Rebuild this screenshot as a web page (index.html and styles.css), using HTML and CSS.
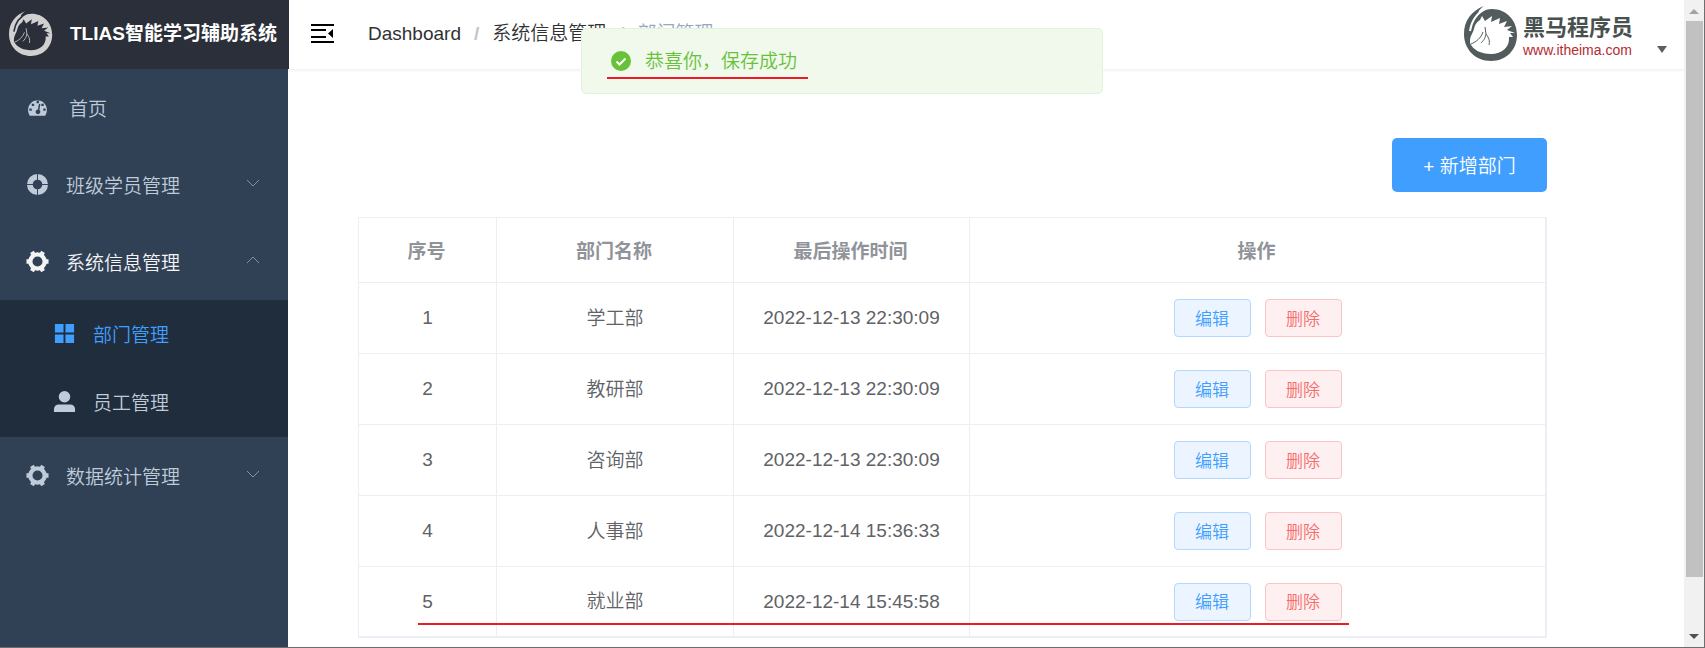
FILE: index.html
```html
<!DOCTYPE html>
<html lang="zh-CN">
<head>
    <meta charset="UTF-8">
    <meta name="viewport" content="width=device-width, initial-scale=1.0">
    <title>TLIAS智能学习辅助系统</title>
    <link rel="stylesheet" href="styles.css">
</head>
<body>
    <!-- shared icons -->
    <svg class="sprite" aria-hidden="true">
        <symbol id="horse" viewBox="0 0 54 56">
            <path d="M20 0C7 5 0 15 0 28C0 44 12 55 27 55C42 55 53 44 53 29C53 14 42 3 28 3C24 3 20 4 17 6C13 8 14 4 20 0Z"/>
            <path class="hole-line" d="M23 2C14 6 8 13 6 25"/>
            <path class="hole" d="M6 35C6 30 9 27 10 23C11 18 13 16 16 14L18 10L21 15L28 10L27 16L36 12L35 18L43 15L40 21L48 20L43 24L51 27L46 27L49 31L45 31C46 41 38 48 27 48C17 48 9 44 6 37Z"/>
            <path class="face" d="M7 38C12 36 17 32 19 26M21 21L22 28C21 33 19 35 17 37M22 28C25 32 26 35 25 39"/>
        </symbol>
        <symbol id="gear" viewBox="0 0 24 24">
            <circle cx="12" cy="12" r="7.500" fill="none" stroke="currentColor" stroke-width="4.500"/>
            <path d="M.5 12H4M20 12h3.500M6.200 2 8 5M16 19l1.800 3M17.800 2 16 5M8 19l-1.800 3" stroke="currentColor" stroke-width="4.500"/>
        </symbol>
        <symbol id="arrow" viewBox="0 0 14 8">
            <path d="M1 1l6 6 6-6" fill="none" stroke="currentColor"/>
        </symbol>
    </svg>

    <div class="app">
        <aside class="sidebar">
            <div class="brand">
                <svg class="brand-logo"><use href="#horse"/></svg>
                <h1>TLIAS智能学习辅助系统</h1>
            </div>
            <nav class="menu">
                <a href="#" class="item home">
                    <svg class="icon" viewBox="0 0 24 24"><path fill-rule="evenodd" d="M4 20.500C1 16 2 10.500 5 7.500c4-4 10-4 14 0 3 3 4 8.500 1 13ZM11 5h2.500v2.500H11ZM6 8h2.500v2.500H6ZM16 8h2.500v2.500H16ZM3.500 13H6v2.500H3.500ZM18 13h2.500v2.500H18ZM13.500 8l-1 6a2.500 2.500 0 1 0 1.500.5L15 8.500Z"/></svg>
                    <span>首页</span>
                </a>
                <a href="#" class="item">
                    <svg class="icon" viewBox="0 0 24 24"><circle cx="12" cy="12" r="8" fill="none" stroke="currentColor" stroke-width="6"/><path class="gap" d="M12 0v8M12 16v8M0 12h8M16 12h8"/></svg>
                    <span>班级学员管理</span>
                    <svg class="arrow"><use href="#arrow"/></svg>
                </a>
                <a href="#" class="item open">
                    <svg class="icon"><use href="#gear"/></svg>
                    <span>系统信息管理</span>
                    <svg class="arrow up"><use href="#arrow"/></svg>
                </a>
                <div class="submenu">
                    <a href="#" class="subitem active">
                        <svg class="icon" viewBox="0 0 24 24"><path d="M2 2h9v9H2ZM13 2h9v9H13ZM2 13h9v9H2ZM13 13h9v9H13Z"/></svg>
                        <span>部门管理</span>
                    </a>
                    <a href="#" class="subitem">
                        <svg class="icon" viewBox="0 0 24 24"><circle cx="12" cy="7" r="6"/><path d="M1 23v-3a5 5 0 0 1 5-5h12a5 5 0 0 1 5 5v3Z"/></svg>
                        <span>员工管理</span>
                    </a>
                </div>
                <a href="#" class="item">
                    <svg class="icon"><use href="#gear"/></svg>
                    <span>数据统计管理</span>
                    <svg class="arrow"><use href="#arrow"/></svg>
                </a>
            </nav>
        </aside>

        <div class="page">
            <header class="navbar">
                <button type="button" class="fold" aria-label="收起菜单">
                    <svg viewBox="0 0 23 20"><path d="M0 0h23v2H0ZM0 5h15v2H0ZM0 12h15v2H0ZM0 17h23v2H0ZM22 5v9l-5-4.500Z"/></svg>
                </button>
                <nav class="breadcrumb">
                    <a href="#">Dashboard</a><i>/</i><a href="#">系统信息管理</a><i>/</i><span>部门管理</span>
                </nav>
                <div class="account">
                    <svg class="heima-logo"><use href="#horse"/></svg>
                    <div class="heima">
                        <strong>黑马程序员</strong>
                        <span>www.itheima.com</span>
                    </div>
                    <button type="button" class="caret" aria-label="账号"></button>
                </div>
            </header>

            <main class="content">
                <div class="toolbar">
                    <button type="button" class="add">+ 新增部门</button>
                </div>
                <div class="table-box">
                    <table>
                        <colgroup>
                            <col class="c-no">
                            <col class="c-name">
                            <col class="c-time">
                            <col>
                        </colgroup>
                        <thead>
                            <tr><th>序号</th><th>部门名称</th><th>最后操作时间</th><th>操作</th></tr>
                        </thead>
                        <tbody>
                            <tr>
                                <td>1</td><td class="name">学工部</td><td>2022-12-13 22:30:09</td>
                                <td><div class="ops"><button type="button" class="edit">编辑</button><button type="button" class="del">删除</button></div></td>
                            </tr>
                            <tr>
                                <td>2</td><td class="name">教研部</td><td>2022-12-13 22:30:09</td>
                                <td><div class="ops"><button type="button" class="edit">编辑</button><button type="button" class="del">删除</button></div></td>
                            </tr>
                            <tr>
                                <td>3</td><td class="name">咨询部</td><td>2022-12-13 22:30:09</td>
                                <td><div class="ops"><button type="button" class="edit">编辑</button><button type="button" class="del">删除</button></div></td>
                            </tr>
                            <tr>
                                <td>4</td><td class="name">人事部</td><td>2022-12-14 15:36:33</td>
                                <td><div class="ops"><button type="button" class="edit">编辑</button><button type="button" class="del">删除</button></div></td>
                            </tr>
                            <tr>
                                <td>5</td><td class="name">就业部</td><td>2022-12-14 15:45:58</td>
                                <td><div class="ops"><button type="button" class="edit">编辑</button><button type="button" class="del">删除</button></div></td>
                            </tr>
                        </tbody>
                    </table>
                    <div class="row-mark"></div>
                </div>
            </main>
        </div>

        <div class="message" role="alert">
            <svg viewBox="0 0 20 20"><circle cx="10" cy="10" r="10"/><path d="M5.500 10.500l3 3 6-6"/></svg>
            <p>恭喜你，保存成功</p>
            <div class="message-mark"></div>
        </div>

        <div class="scrollbar">
            <i class="sb-up"></i>
            <div class="thumb"></div>
            <i class="sb-down"></i>
        </div>
    </div>
</body>
</html>
```
FILE: styles.css
```css
* {
    margin: 0;
    padding: 0;
    box-sizing: border-box;
}
body {
    font-family: "Liberation Sans", "Noto Sans CJK SC", sans-serif;
    font-size: 19px;
    font-weight: 350;
    color: #606266;
    background: #fff;
}
a {
    color: inherit;
    text-decoration: none;
}
button {
    font-family: inherit;
    font-weight: inherit;
    cursor: pointer;
}
svg {
    fill: currentColor;
    flex: none;
}
.sprite {
    position: absolute;
    width: 0;
    height: 0;
}
.app {
    position: relative;
    display: flex;
    min-height: 100vh;
    border-right: 1px solid #6e6e6e;
    border-bottom: 1px solid #6e6e6e;
}

/* horse logo, same drawing on dark and light */
.hole {
    fill: var(--hole);
}
.hole-line {
    fill: none;
    stroke: var(--hole);
    stroke-width: 2;
}
.face {
    fill: none;
    stroke: currentColor;
    stroke-width: 1;
}

/* sidebar */
.sidebar {
    width: 288px;
    flex: none;
    background: #304156;
    color: #bfcbd9;
}
.brand {
    width: 289px;
    height: 69px;
    padding: 0 0 2px 9px;
    display: flex;
    align-items: center;
    gap: 17px;
    background: #2b2f3a;
    color: #fff;
    position: relative;
    z-index: 1;
}
.brand-logo {
    --hole: #2b2f3a;
    width: 44px;
    height: 46px;
    color: #d0d0d0;
}
.brand h1 {
    font-size: 19px;
    line-height: 28px;
    white-space: nowrap;
}
.item, .subitem {
    display: flex;
    align-items: center;
    gap: 12px;
    height: 77px;
    padding: 0 28px 0 21px;
}
.home {
    gap: 15px;
}
.icon {
    width: 33px;
    height: 23px;
}
.gap {
    stroke: #304156;
    stroke-width: 1;
}
.arrow {
    width: 14px;
    height: 8px;
    margin: 0 0 4px auto;
    color: #8393a5;
}
.up {
    transform: rotate(180deg);
}
.open {
    color: #f4f4f5;
}
.submenu {
    background: #1f2d3d;
    padding-bottom: 1px;
}
.subitem {
    height: 68px;
    padding: 0 28px 2px 48px;
}
.active {
    color: #409eff;
}

/* top bar */
.page {
    flex: 1;
    min-width: 0;
}
.navbar {
    height: 69px;
    padding: 0 17px 2px 23px;
    display: flex;
    align-items: center;
    box-shadow: 0 1px 4px rgba(0, 21, 41, 0.08);
}
.fold {
    width: 23px;
    height: 20px;
    border: 0;
    background: none;
    color: #000;
}
.fold svg {
    display: block;
    width: 23px;
    height: 20px;
}
.breadcrumb {
    display: flex;
    gap: 13px;
    margin-left: 34px;
    line-height: 28px;
    white-space: nowrap;
    color: #303133;
}
.breadcrumb i {
    font-style: normal;
    font-weight: bold;
    color: #c0c4cc;
}
.breadcrumb span {
    color: #97a8be;
}
.account {
    display: flex;
    align-items: center;
    margin-left: auto;
}
.heima-logo {
    --hole: #fff;
    width: 54px;
    height: 56px;
    margin-right: 5px;
    color: #535c5c;
}
.heima {
    padding-top: 9px;
}
.heima strong, .heima span {
    display: block;
}
.heima strong {
    font-size: 22px;
    font-weight: 700;
    line-height: 24px;
    color: #49514f;
}
.heima span {
    font-size: 14px;
    line-height: 20px;
    color: #b52c30;
}
.caret {
    margin: 32px 0 0 24px;
    border: 5px solid transparent;
    border-top: 7px solid #5a5e66;
    border-bottom: 0;
    background: none;
}

/* department list */
.content {
    padding: 69px 137px 9px 70px;
}
.toolbar {
    display: flex;
    justify-content: flex-end;
    margin-bottom: 25px;
}
.add {
    width: 155px;
    height: 54px;
    padding-bottom: 2px;
    border: 0;
    border-radius: 5px;
    background: #409eff;
    color: #fff;
    font-size: 19px;
}
.table-box {
    position: relative;
    border: 1px solid #ebeef5;
    border-right-width: 2px;
    border-bottom: 0;
}
table {
    width: 100%;
    table-layout: fixed;
    border-collapse: separate;
    border-spacing: 0;
}
.c-no {
    width: 138px;
}
.c-name {
    width: 237px;
}
.c-time {
    width: 236px;
}
th, td {
    text-align: center;
    border-right: 1px solid #ebeef5;
    border-bottom: 1px solid #ebeef5;
}
th:last-child, td:last-child {
    border-right: 0;
}
th {
    height: 65px;
    padding: 0 2px 2px 0;
    color: #909399;
}
td {
    height: 71px;
}
.name {
    padding-bottom: 4px;
}
tbody tr:last-child td {
    border-bottom-width: 2px;
}
.ops {
    display: flex;
    justify-content: center;
    gap: 14px;
}
.ops button {
    width: 77px;
    height: 38px;
    padding-bottom: 2px;
    border: 1px solid;
    border-radius: 4px;
    font-size: 17px;
}
.ops .edit {
    color: #409eff;
    background: #ecf5ff;
    border-color: #b3d8ff;
}
.ops .del {
    color: #f56c6c;
    background: #fef0f0;
    border-color: #fbc4c4;
}
.row-mark {
    position: absolute;
    left: 5%;
    right: 196px;
    bottom: 13px;
    height: 2px;
    background: #ed1c24;
}

/* success message */
.message {
    position: absolute;
    top: 28px;
    left: 581px;
    right: 601px;
    height: 66px;
    padding: 0 29px;
    display: flex;
    align-items: center;
    gap: 14px;
    border: 1px solid #e1f3d8;
    border-radius: 5px;
    background: #f0f9eb;
    color: #67c23a;
    z-index: 2;
}
.message svg {
    width: 20px;
    height: 20px;
}
.message path {
    fill: none;
    stroke: #fff;
    stroke-width: 2;
}
.message p {
    padding-bottom: 4px;
}
.message-mark {
    position: absolute;
    left: 25px;
    bottom: 14px;
    width: 201px;
    height: 2px;
    background: #ed1c24;
}

/* scrollbar */
.scrollbar {
    width: 20px;
    flex: none;
    display: flex;
    flex-direction: column;
    align-items: center;
    background: #f1f1f1;
}
.thumb {
    flex: 1;
    width: 17px;
    margin: 7px 0 57px;
    background: #c1c1c1;
}
.sb-up, .sb-down {
    border: 5px solid transparent;
}
.sb-up {
    margin-top: 9px;
    border-top: 0;
    border-bottom-color: #a3a3a3;
}
.sb-down {
    margin-bottom: 8px;
    border-bottom: 0;
    border-top-color: #505050;
}
```
